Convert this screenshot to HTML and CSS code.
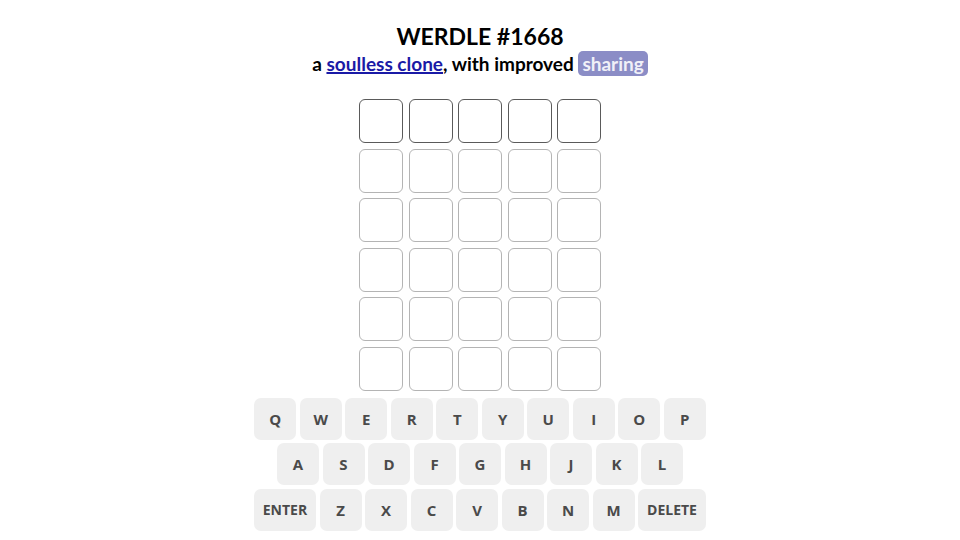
FILE: index.html
```html
<!DOCTYPE html>
<html>
<head>
<meta charset="utf-8">
<link rel="stylesheet" href="styles.css">
</head>
<body>
<div class="page">
  <header class="head">
    <h1 class="title">WERDLE #1668</h1>
    <p class="sub">a <a class="link" href="#">soulless clone</a>, with improved <span class="badge">sharing</span></p>
  </header>
  <div class="board">
    <div class="row active"><div class="tile"></div><div class="tile"></div><div class="tile"></div><div class="tile"></div><div class="tile"></div></div>
    <div class="row"><div class="tile"></div><div class="tile"></div><div class="tile"></div><div class="tile"></div><div class="tile"></div></div>
    <div class="row"><div class="tile"></div><div class="tile"></div><div class="tile"></div><div class="tile"></div><div class="tile"></div></div>
    <div class="row"><div class="tile"></div><div class="tile"></div><div class="tile"></div><div class="tile"></div><div class="tile"></div></div>
    <div class="row"><div class="tile"></div><div class="tile"></div><div class="tile"></div><div class="tile"></div><div class="tile"></div></div>
    <div class="row"><div class="tile"></div><div class="tile"></div><div class="tile"></div><div class="tile"></div><div class="tile"></div></div>
  </div>
  <div class="keyboard">
    <div class="krow">
      <button class="key">Q</button><button class="key">W</button><button class="key">E</button><button class="key">R</button><button class="key">T</button><button class="key">Y</button><button class="key">U</button><button class="key">I</button><button class="key">O</button><button class="key">P</button>
    </div>
    <div class="krow">
      <button class="key">A</button><button class="key">S</button><button class="key">D</button><button class="key">F</button><button class="key">G</button><button class="key">H</button><button class="key">J</button><button class="key">K</button><button class="key">L</button>
    </div>
    <div class="krow">
      <button class="key enter">ENTER</button><button class="key">Z</button><button class="key">X</button><button class="key">C</button><button class="key">V</button><button class="key">B</button><button class="key">N</button><button class="key">M</button><button class="key del">DELETE</button>
    </div>
  </div>
</div>
</body>
</html>
```
FILE: styles.css
```css
html, body {
  margin: 0;
  padding: 0;
  background: #ffffff;
}
.page {
  width: 960px;
  height: 540px;
  display: flex;
  flex-direction: column;
  align-items: center;
  font-family: Lato, "Open Sans", sans-serif;
  overflow: hidden;
}
.head {
  display: flex;
  flex-direction: column;
  align-items: center;
  padding-top: 22px;
}
.title {
  margin: 0;
  font-size: 23px;
  line-height: 28px;
  font-weight: 700;
  color: #000;
}
.sub {
  margin: 0;
  font-size: 19px;
  line-height: 27px;
  font-weight: 700;
  color: #000;
}
.link {
  color: #1a1aa6;
  text-decoration: underline;
  text-decoration-thickness: 2px;
}
.badge {
  display: inline-block;
  background: #8b8dc6;
  color: #f0f0f8;
  border-radius: 5px;
  padding: 0 4px;
  line-height: 25px;
}
.board {
  margin-top: 22px;
  display: flex;
  flex-direction: column;
  gap: 5.6px;
}
.row {
  display: flex;
  gap: 5.5px;
}
.tile {
  width: 44px;
  height: 44px;
  box-sizing: border-box;
  border: 1px solid #b4b4b4;
  border-radius: 6px;
}
.row.active .tile {
  border-color: #5a5a5a;
}
.keyboard {
  margin-top: 7px;
  display: flex;
  flex-direction: column;
  align-items: center;
  gap: 3.5px;
}
.krow {
  display: flex;
  gap: 3.5px;
}
.key {
  width: 42px;
  height: 42px;
  padding: 0;
  border: none;
  border-radius: 7px;
  background: #efefef;
  color: #4a4a4a;
  font-family: "Open Sans", sans-serif;
  font-weight: 700;
  font-size: 15px;
  display: flex;
  align-items: center;
  justify-content: center;
}
.key.enter { width: 62px; font-size: 14px; }
.key.del { width: 68px; font-size: 14px; }
```
